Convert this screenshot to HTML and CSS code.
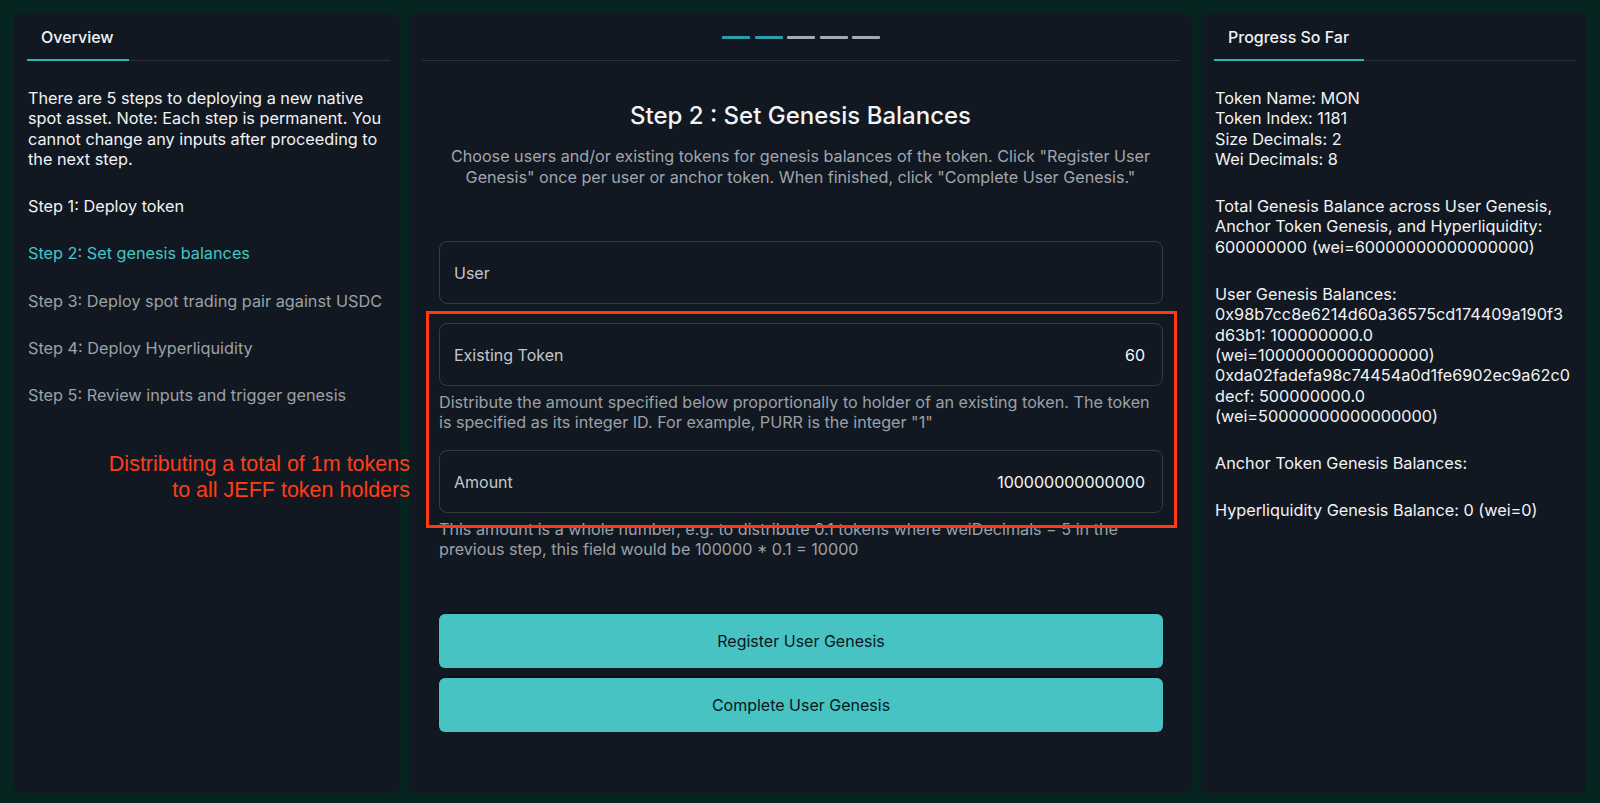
FILE: index.html
```html
<!DOCTYPE html>
<html lang="en">
<head>
  <meta charset="UTF-8">
  <meta name="viewport" content="width=device-width, initial-scale=1.0">
  <title>Deploy Spot Asset</title>
  <link rel="stylesheet" href="styles.css">
</head>
<body>

  <div class="layout">

    <!-- left: overview of the steps -->
    <div class="panel side">
      <div class="tabs">
        <div class="tab">Overview</div>
      </div>
      <div class="side-body">
        <p>There are 5 steps to deploying a new native<br>spot asset. Note: Each step is permanent. You<br>cannot change any inputs after proceeding to<br>the next step.</p>
        <p class="step done">Step 1: Deploy token</p>
        <p class="step current">Step 2: Set genesis balances</p>
        <p class="step">Step 3: Deploy spot trading pair against USDC</p>
        <p class="step">Step 4: Deploy Hyperliquidity</p>
        <p class="step">Step 5: Review inputs and trigger genesis</p>
      </div>
    </div>

    <!-- middle: current step form -->
    <div class="panel main">
      <div class="progress">
        <span class="dash active"></span>
        <span class="dash active"></span>
        <span class="dash"></span>
        <span class="dash"></span>
        <span class="dash"></span>
      </div>

      <h1>Step 2 : Set Genesis Balances</h1>
      <p class="intro">Choose users and/or existing tokens for genesis balances of the token. Click "Register User<br>Genesis" once per user or anchor token. When finished, click "Complete User Genesis."</p>

      <div class="form">
        <label class="field">
          <span>User</span>
          <input type="text">
        </label>

        <label class="field gap">
          <span>Existing Token</span>
          <input type="text" value="60">
        </label>
        <p class="hint">Distribute the amount specified below proportionally to holder of an existing token. The token<br>is specified as its integer ID. For example, PURR is the integer "1"</p>

        <label class="field gap-lg">
          <span>Amount</span>
          <input type="text" value="100000000000000">
        </label>
        <p class="hint">This amount is a whole number, e.g. to distribute 0.1 tokens where weiDecimals = 5 in the<br>previous step, this field would be 100000 * 0.1 = 10000</p>

        <div class="highlight"></div>

        <button class="btn first">Register User Genesis</button>
        <button class="btn">Complete User Genesis</button>
      </div>
    </div>

    <!-- right: summary -->
    <div class="panel side">
      <div class="tabs">
        <div class="tab">Progress So Far</div>
      </div>
      <div class="side-body">
        <p>Token Name: MON<br>Token Index: 1181<br>Size Decimals: 2<br>Wei Decimals: 8</p>
        <p>Total Genesis Balance across User Genesis,<br>Anchor Token Genesis, and Hyperliquidity:<br>600000000 (wei=60000000000000000)</p>
        <p>User Genesis Balances:<br>0x98b7cc8e6214d60a36575cd174409a190f3<br>d63b1: 100000000.0<br>(wei=10000000000000000)<br>0xda02fadefa98c74454a0d1fe6902ec9a62c0<br>decf: 500000000.0<br>(wei=50000000000000000)</p>
        <p>Anchor Token Genesis Balances:</p>
        <p>Hyperliquidity Genesis Balance: 0 (wei=0)</p>
      </div>
    </div>

  </div>

  <div class="note">Distributing a total of 1m tokens<br>to all JEFF token holders</div>

</body>
</html>
```

FILE: styles.css
```css
body {
  margin: 0;
  font-family: Inter, "Noto Sans", sans-serif;
  background-color: #05231f;
  color: #f1f3f5;
  position: relative;
}
.layout {
  display: grid;
  grid-template-columns: 386px 783px 385px;
  column-gap: 9px;
  padding: 14px 13px 10px 14px;
  height: 779px;
}
.panel {
  background-color: #111821;
  border-radius: 6px;
}
.tabs {
  display: flex;
  margin: 0 10px 0 13px;
  border-bottom: 1px solid #2a2f35;
}
.tab {
  padding: 13px 15px 12px 14px;
  font-size: 16px;
  line-height: 20px;
  font-weight: 500;
  border-bottom: 2px solid #2fb3bd;
  margin-bottom: -1px;
}
.side-body {
  padding: 27px 8px 0 14px;
  font-size: 16.25px;
  line-height: 20.3px;
}
.side-body p {
  margin: 0 0 27px;
}
.step {
  color: #9ca1a8;
}
.step.done {
  color: #f1f3f5;
}
.step.current {
  color: #43c6c6;
}

.progress {
  display: flex;
  justify-content: center;
  gap: 4.5px;
  padding-top: 22px;
  margin: 0 12px 0 13px;
  padding-bottom: 21px;
  border-bottom: 1px solid #2e3237;
}
.dash {
  width: 28px;
  height: 3px;
  border-radius: 1px;
  background-color: #a7abb1;
}
.dash.active {
  background-color: #2a9fab;
}
h1 {
  margin: 39px 0 0;
  font-size: 24px;
  line-height: 32px;
  font-weight: 500;
  text-align: center;
}
.intro {
  margin: 14px 0 0;
  font-size: 16.15px;
  line-height: 21px;
  color: #a1a6ad;
  text-align: center;
}
.form {
  position: relative;
  margin: 53px 29px 0 30px;
}
.field {
  box-sizing: border-box;
  display: flex;
  align-items: center;
  height: 63px;
  padding: 0 17px 0 14px;
  border: 1px solid #363b42;
  border-radius: 8px;
  font-size: 16px;
  color: #c3c7cd;
}
.field span {
  white-space: nowrap;
}
.field input {
  flex: 1;
  min-width: 0;
  background: transparent;
  border: none;
  outline: none;
  text-align: right;
  font-family: Inter, "Noto Sans", sans-serif;
  font-size: 16px;
  color: #f5f6f8;
  padding: 0;
}
.field.gap {
  margin-top: 19px;
}
.field.gap-lg {
  margin-top: 18px;
}
.hint {
  margin: 6px 0 0;
  font-size: 16.15px;
  line-height: 20px;
  color: #9ca1a8;
}
.highlight {
  position: absolute;
  left: -13px;
  right: -14px;
  top: 70px;
  height: 211px;
  border: 3px solid #ff3a12;
  pointer-events: none;
}
.btn {
  display: block;
  width: 100%;
  height: 54px;
  margin-top: 10px;
  border: none;
  border-radius: 6px;
  background-color: #47c3c4;
  color: #0b171c;
  font-family: Inter, "Noto Sans", sans-serif;
  font-size: 16px;
  box-shadow: 0 -1px 2px rgba(0, 0, 0, 0.6);
  cursor: pointer;
}
.btn.first {
  margin-top: 55px;
}
.note {
  position: absolute;
  top: 452px;
  left: 60px;
  width: 350px;
  text-align: right;
  font-family: "Liberation Sans", Arial, sans-serif;
  font-size: 21.5px;
  line-height: 25.5px;
  color: #ff3d17;
}
```
